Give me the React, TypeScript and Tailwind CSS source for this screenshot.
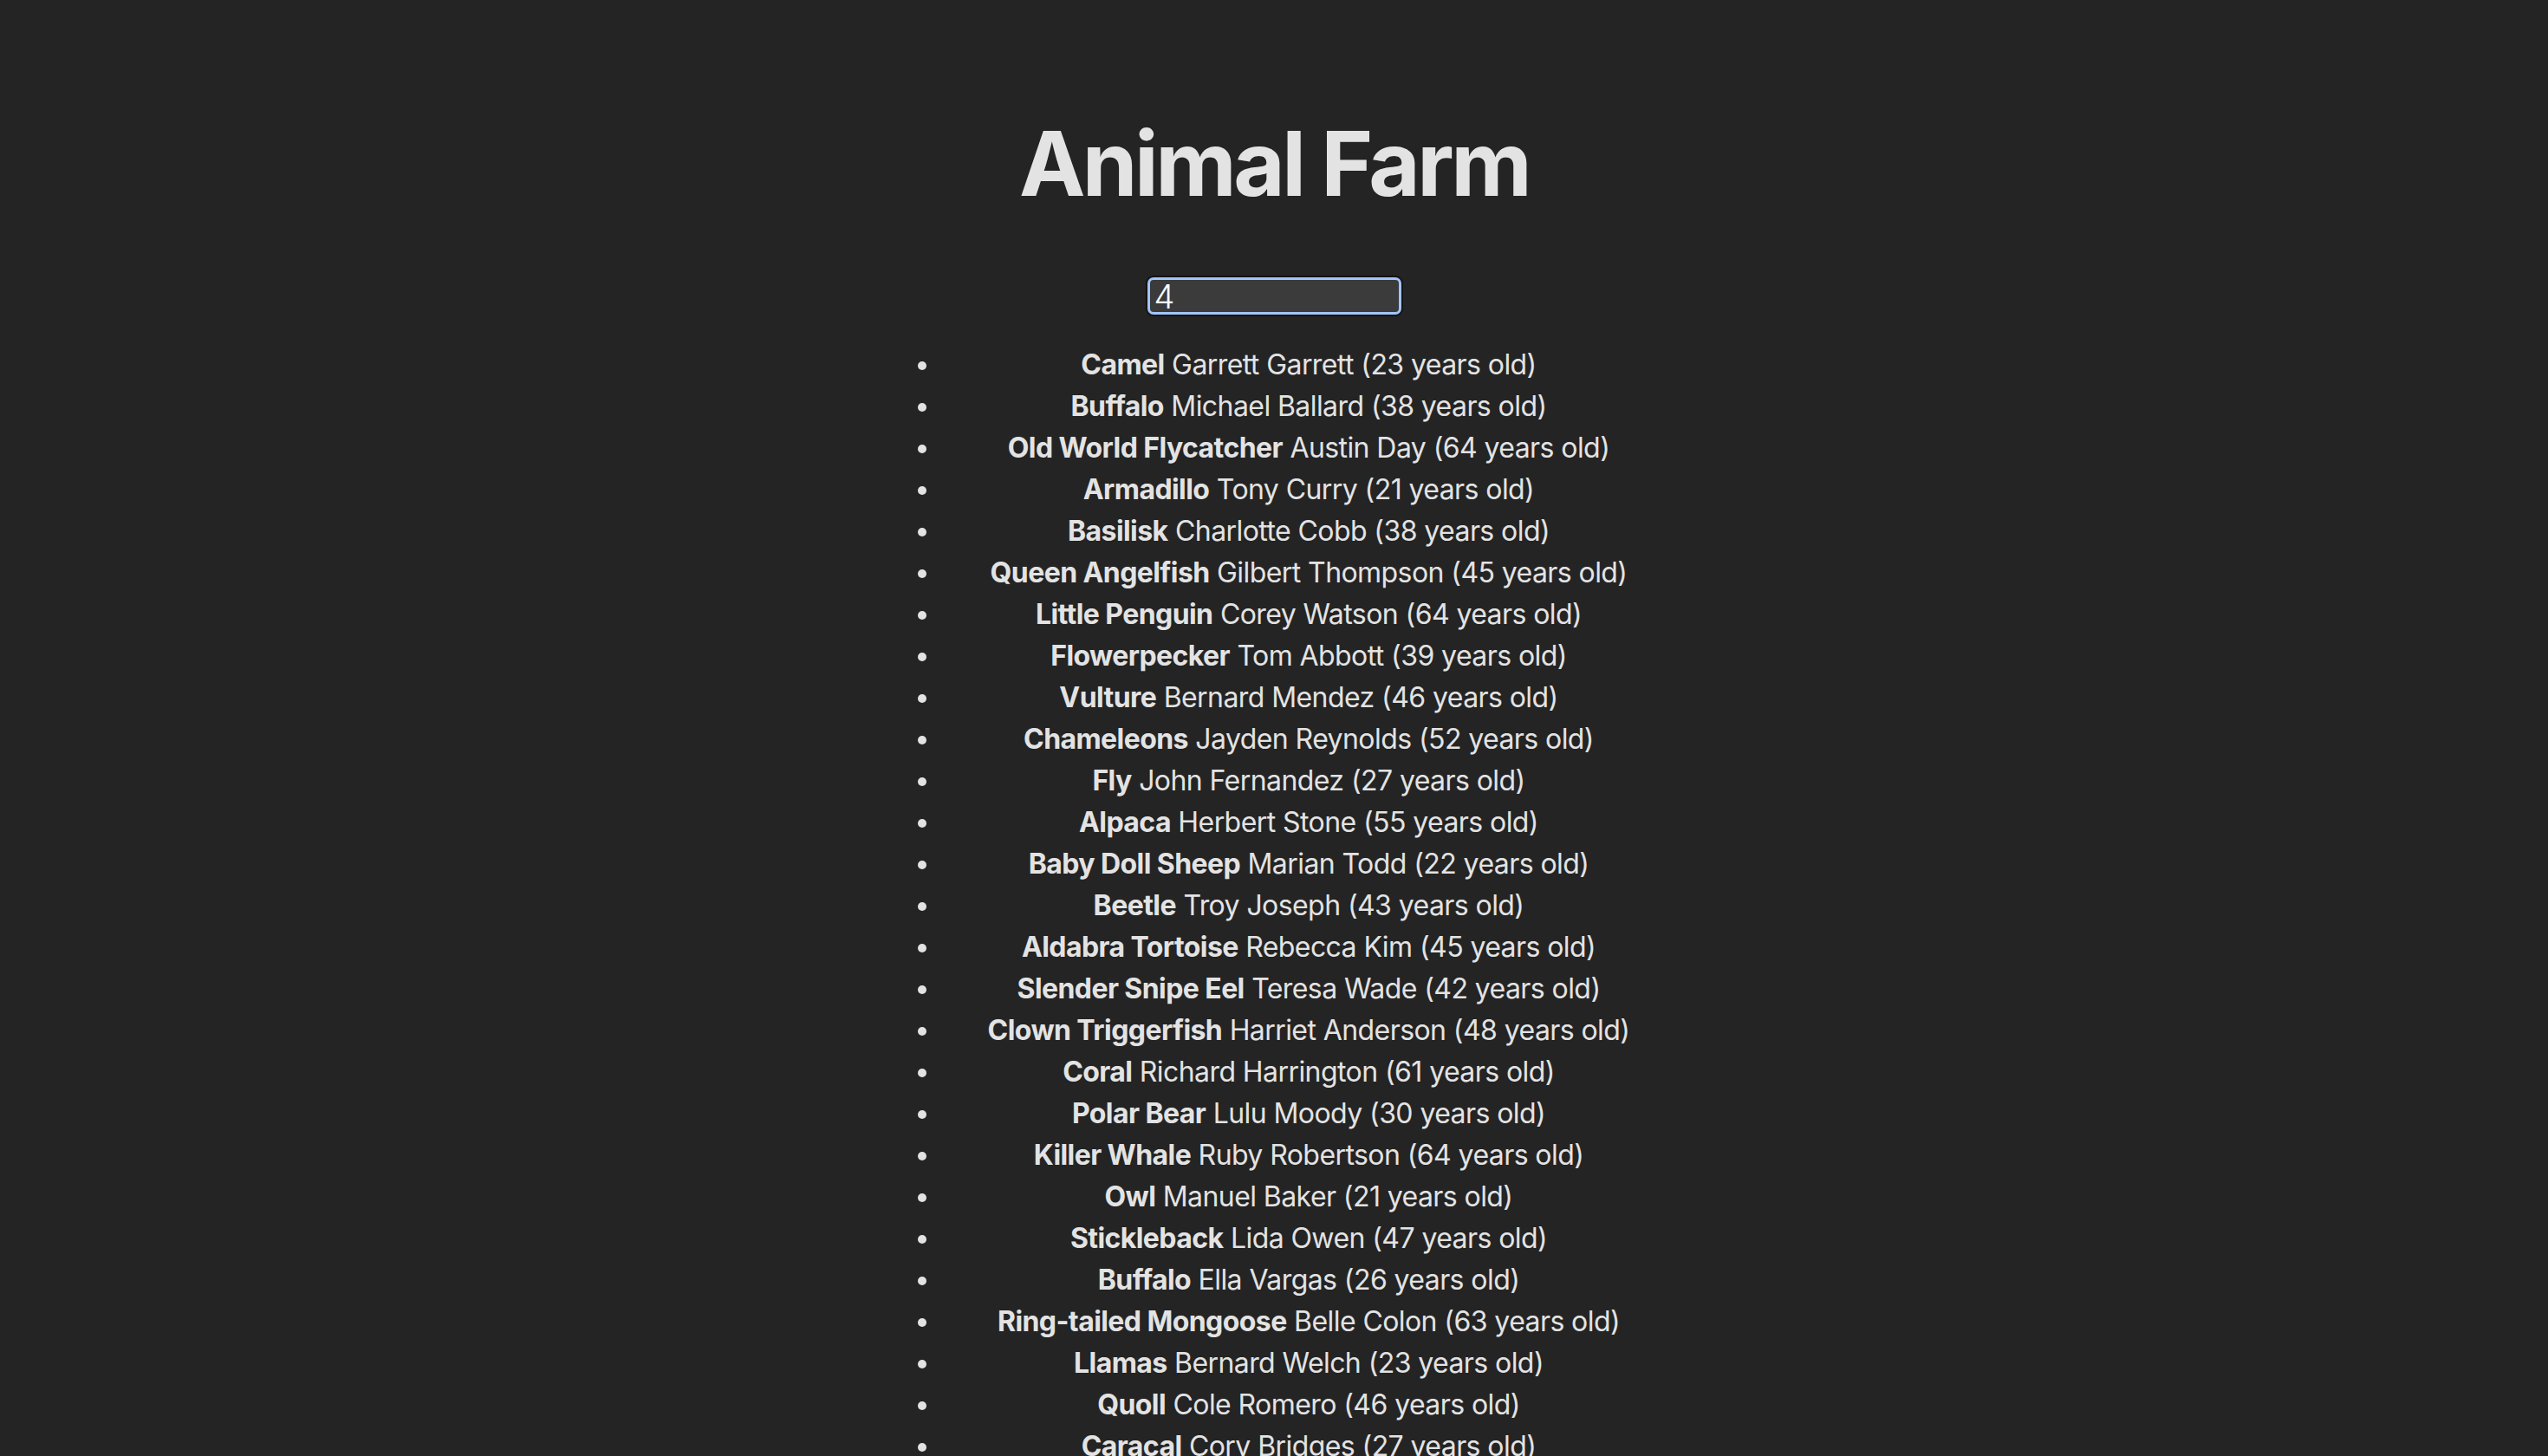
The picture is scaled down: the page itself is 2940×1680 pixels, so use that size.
import { useState } from "react";

const animals = [
  { type: "Camel", name: "Garrett Garrett", age: 23 },
  { type: "Buffalo", name: "Michael Ballard", age: 38 },
  { type: "Old World Flycatcher", name: "Austin Day", age: 64 },
  { type: "Armadillo", name: "Tony Curry", age: 21 },
  { type: "Basilisk", name: "Charlotte Cobb", age: 38 },
  { type: "Queen Angelfish", name: "Gilbert Thompson", age: 45 },
  { type: "Little Penguin", name: "Corey Watson", age: 64 },
  { type: "Flowerpecker", name: "Tom Abbott", age: 39 },
  { type: "Vulture", name: "Bernard Mendez", age: 46 },
  { type: "Chameleons", name: "Jayden Reynolds", age: 52 },
  { type: "Fly", name: "John Fernandez", age: 27 },
  { type: "Alpaca", name: "Herbert Stone", age: 55 },
  { type: "Baby Doll Sheep", name: "Marian Todd", age: 22 },
  { type: "Beetle", name: "Troy Joseph", age: 43 },
  { type: "Aldabra Tortoise", name: "Rebecca Kim", age: 45 },
  { type: "Slender Snipe Eel", name: "Teresa Wade", age: 42 },
  { type: "Clown Triggerfish", name: "Harriet Anderson", age: 48 },
  { type: "Coral", name: "Richard Harrington", age: 61 },
  { type: "Polar Bear", name: "Lulu Moody", age: 30 },
  { type: "Killer Whale", name: "Ruby Robertson", age: 64 },
  { type: "Owl", name: "Manuel Baker", age: 21 },
  { type: "Stickleback", name: "Lida Owen", age: 47 },
  { type: "Buffalo", name: "Ella Vargas", age: 26 },
  { type: "Ring-tailed Mongoose", name: "Belle Colon", age: 63 },
  { type: "Llamas", name: "Bernard Welch", age: 23 },
  { type: "Quoll", name: "Cole Romero", age: 46 },
  { type: "Caracal", name: "Cory Bridges", age: 27 },
];

export default function App() {
  const [query, setQuery] = useState("4");

  return (
    <div className="min-h-screen bg-[#242424] flex justify-center text-[#e3e3e3] font-['Inter','Noto_Sans',sans-serif] text-[32px] leading-[1.5]">
      <div className="p-16 text-center">
        <h1 className="mt-[68.6px] mb-[75px] text-[102.4px] leading-[1.1] font-bold tracking-[-0.034em]">
          Animal Farm
        </h1>

        <div className="flex justify-center">
          <input
            autoFocus
            value={query}
            onChange={(e) => setQuery(e.target.value)}
            className="h-[43px] w-[293px] rounded-[7px] border-[3px] border-[#a2c5fa] bg-[#3b3b3b] px-[5px] text-[38px] leading-none font-light text-white caret-white outline-none shadow-[0_0_0_2px_#141414]"
          />
        </div>

        <ul className="mt-[34px] w-[929px] list-disc pl-20 tracking-[-0.018em]">
          {animals.map((a, i) => (
            <li key={i}>
              <b className="font-bold">{a.type}</b> {a.name} ({a.age} years old)
            </li>
          ))}
        </ul>
      </div>
    </div>
  );
}
